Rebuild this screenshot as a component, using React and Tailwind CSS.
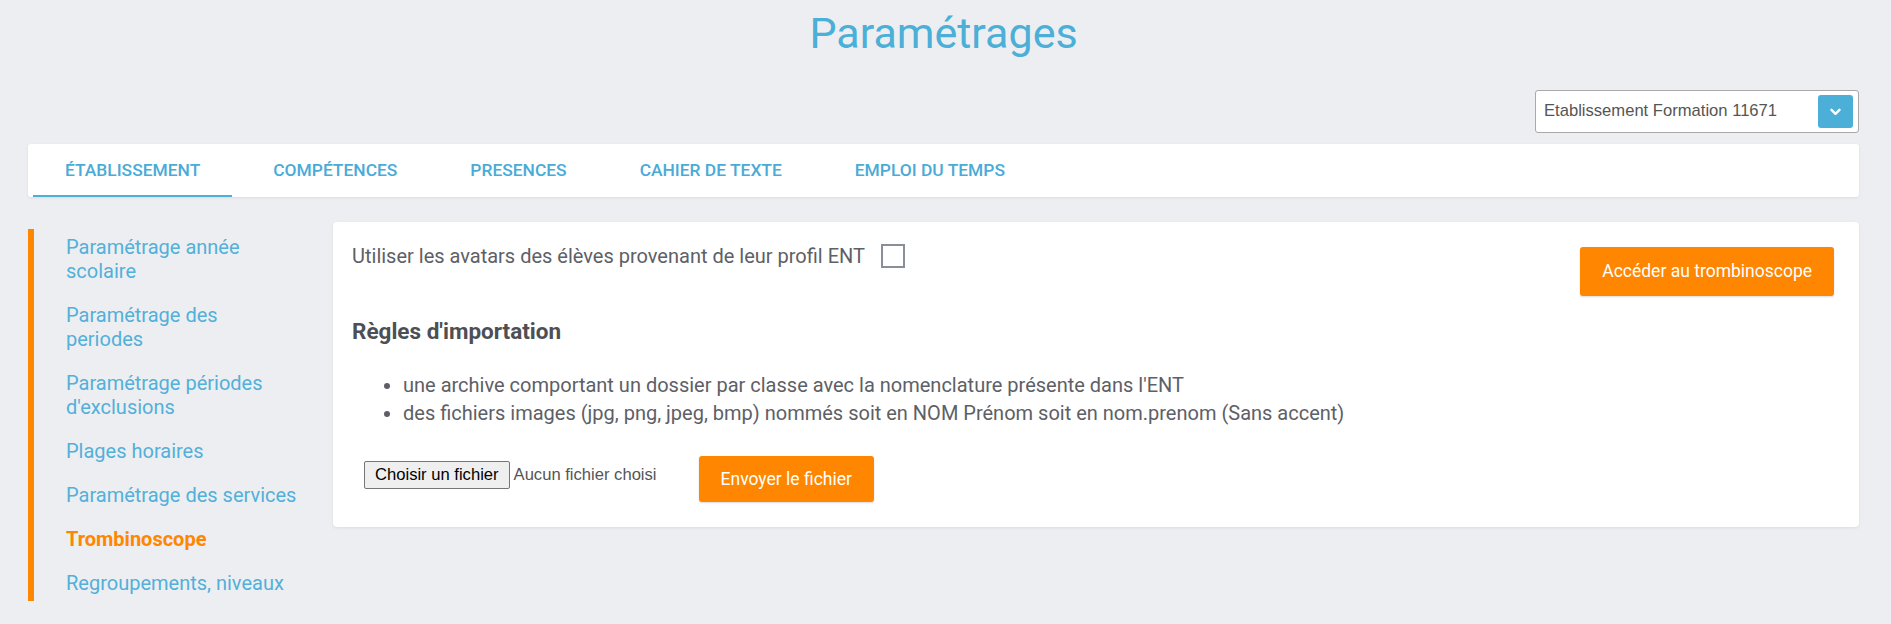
import React from 'react'

const tabs = ['Établissement', 'Compétences', 'Presences', 'Cahier de texte', 'Emploi du temps']

// explicit line splits so wrapping matches the original sidebar width
const menu = [
  { lines: ['Paramétrage année', 'scolaire'] },
  { lines: ['Paramétrage des', 'periodes'] },
  { lines: ['Paramétrage périodes', "d'exclusions"] },
  { lines: ['Plages horaires'] },
  { lines: ['Paramétrage des services'] },
  { lines: ['Trombinoscope'], active: true },
  { lines: ['Regroupements, niveaux'] },
]

function SchoolSelect() {
  return (
    <div className="flex h-[43px] w-[324px] items-center justify-between rounded-[3px] border border-[#a9a9a9] bg-white pl-[8px] pr-[5px]">
      <span className="font-['Liberation_Sans',Arial,sans-serif] text-[16.6px] text-[#555]">Etablissement Formation 11671</span>
      <span className="flex h-[33px] w-[35px] items-center justify-center rounded-[3px] bg-[#4bafd8]">
        <svg width="11" height="8" viewBox="0 0 11 8" fill="none">
          <path d="M1.5 1.8 5.5 5.8 9.5 1.8" stroke="white" strokeWidth="2.4" strokeLinecap="round" strokeLinejoin="round" />
        </svg>
      </span>
    </div>
  )
}

function TabBar() {
  return (
    <div className="mt-[11px] flex h-[53px] items-stretch gap-[9px] rounded-[3px] bg-white pl-[5px] shadow-[0_1px_3px_rgba(0,0,0,0.08)]">
      {tabs.map((t, i) => (
        <div
          key={t}
          className={
            i === 0
              ? 'flex items-center border-b-2 border-[#4bafd8] px-[32px] pt-[2px] text-[17.4px] font-medium uppercase text-[#4aabd6]'
              : 'flex items-center border-b-2 border-transparent px-[32px] pt-[2px] text-[17.4px] font-medium uppercase text-[#4aabd6]'
          }
        >
          {t}
        </div>
      ))}
    </div>
  )
}

function Sidebar() {
  return (
    <div className="mt-[7px] w-[290px] shrink-0 self-start border-l-[6px] border-[#ff8600] pb-[6px] pl-[32px] pt-[6px]">
      <div className="flex flex-col gap-[20px]">
        {menu.map((m) => (
          <div
            key={m.lines[0]}
            className={
              m.active
                ? 'text-[20px] font-bold leading-[24px] text-[#ff8600]'
                : 'text-[20px] leading-[24px] text-[#52b0da]'
            }
          >
            {m.lines.map((l) => (
              <div key={l} className="whitespace-nowrap">{l}</div>
            ))}
          </div>
        ))}
      </div>
    </div>
  )
}

function TrombiCard() {
  return (
    <div className="flex-1 self-start rounded-[4px] bg-white pb-[25px] pl-[19px] pr-[25px] pt-[22px] shadow-[0_1px_3px_rgba(0,0,0,0.08)]">
      <div className="flex items-start justify-between">
        <div className="flex items-center gap-[16px]">
          <span className="text-[20px] leading-[24px] text-[#5d6066]">Utiliser les avatars des élèves provenant de leur profil ENT</span>
          <span className="h-[24px] w-[24px] border-2 border-[#8a8e98] bg-white" />
        </div>
        <button className="mt-[3px] h-[49px] rounded-[3px] bg-[#ff8600] px-[22px] text-[17.5px] text-white shadow-[0_1px_2px_rgba(0,0,0,0.15)]">
          Accéder au trombinoscope
        </button>
      </div>

      <h2 className="mt-[21px] text-[22.5px] font-bold leading-[28px] text-[#4c4f55]">Règles d'importation</h2>

      <ul className="mt-[26px] list-disc pl-[51px] text-[20px] leading-[28px] text-[#5d6066]">
        <li>une archive comportant un dossier par classe avec la nomenclature présente dans l'ENT</li>
        <li>des fichiers images (jpg, png, jpeg, bmp) nommés soit en NOM Prénom soit en nom.prenom (Sans accent)</li>
      </ul>

      <div className="mt-[29px] flex items-start">
        <label className="ml-[12px] mt-[5px] flex items-center gap-[4px] font-['Liberation_Sans',Arial,sans-serif] text-[16.6px]">
          <span className="flex h-[28px] items-center rounded-[2px] border border-[#767676] bg-[#efefef] px-[10px] text-black">Choisir un fichier</span>
          <span className="text-[#555]">Aucun fichier choisi</span>
        </label>
        <button className="ml-[42px] h-[46px] rounded-[3px] bg-[#ff8600] px-[22px] text-[17.5px] text-white shadow-[0_1px_2px_rgba(0,0,0,0.15)]">
          Envoyer le fichier
        </button>
      </div>
    </div>
  )
}

export default function App() {
  return (
    <div className="min-h-[624px] bg-[#edeef1] pl-[28px] pr-[32px] font-['Roboto',sans-serif]">
      <h1 className="pt-[7px] text-center text-[43px] font-normal leading-[52px] text-[#4bafd8]">Paramétrages</h1>

      <div className="mt-[31px] flex justify-end">
        <SchoolSelect />
      </div>

      <TabBar />

      <div className="mt-[25px] flex gap-[15px]">
        <Sidebar />
        <TrombiCard />
      </div>
    </div>
  )
}
